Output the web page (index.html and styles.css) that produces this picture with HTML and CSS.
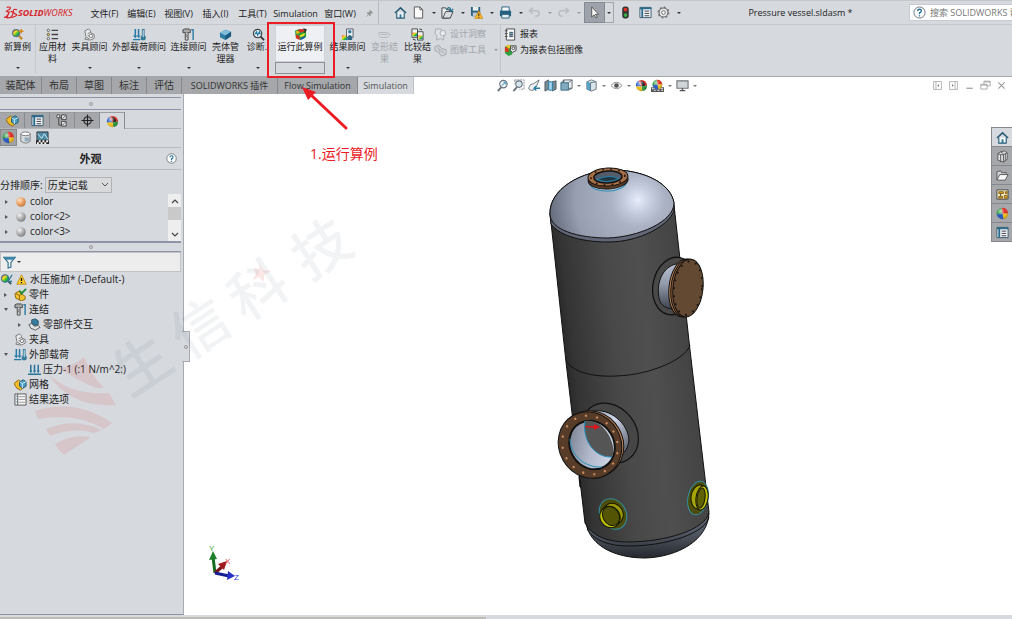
FILE: index.html
```html
<!DOCTYPE html>
<html lang="zh-CN">
<head>
<meta charset="utf-8">
<meta name="viewport" content="width=device-width, initial-scale=1">
<title>Pressure vessel.sldasm</title>
<link rel="stylesheet" href="styles.css">
</head>
<body>
<svg class="sprite" aria-hidden="true">
  <defs>
    <radialGradient id="g-copper" cx=".35" cy=".3" r=".8"><stop offset="0" stop-color="#ffe2c4"/><stop offset=".5" stop-color="#eba56b"/><stop offset="1" stop-color="#b86c30"/></radialGradient>
    <radialGradient id="g-steel" cx=".35" cy=".3" r=".8"><stop offset="0" stop-color="#f4f4f4"/><stop offset=".5" stop-color="#b0b0b0"/><stop offset="1" stop-color="#777"/></radialGradient>
    <linearGradient id="g-rain" x1="0" y1="0" x2="1" y2="1"><stop offset="0" stop-color="#e32"/><stop offset=".35" stop-color="#fd2"/><stop offset=".65" stop-color="#2b3"/><stop offset="1" stop-color="#25d"/></linearGradient>
    <radialGradient id="g-shine" cx=".35" cy=".3" r=".75"><stop offset="0" stop-color="#fff" stop-opacity=".7"/><stop offset=".5" stop-color="#fff" stop-opacity="0"/><stop offset="1" stop-color="#000" stop-opacity=".25"/></radialGradient>
  </defs>
  <symbol id="i-ball" viewBox="0 0 14 14"><path d="M7 7 1 9A6 6 0 0 1 6 1z" fill="#2b9a3e"/><path d="M7 7 6 1a6 6 0 0 1 7 6z" fill="#e02a22"/><path d="M7 7h6a6 6 0 0 1-5 6z" fill="#f3c01c"/><path d="M7 7l1 6A6 6 0 0 1 1 8z" fill="#2457c4"/><circle cx="7" cy="7" r="6" fill="url(#g-shine)"/></symbol>
  <symbol id="i-ball2" viewBox="0 0 14 14"><path d="M7 8 1 8A6 6 0 0 1 4 2z" fill="#2457c4"/><path d="M7 8 4 2a6 6 0 0 1 9 5z" fill="#e02a22"/><path d="M6 2q4 0 5 5L8 8z" fill="#222"/><path d="M7 8l6-1a6 6 0 0 1-5 6z" fill="#2b9a3e"/><path d="M7 8l1 5A6 6 0 0 1 1 8z" fill="#f3c01c"/><circle cx="7" cy="7" r="6" fill="url(#g-shine)"/></symbol>
  <symbol id="i-copper" viewBox="0 0 10 10"><circle cx="5" cy="5" r="4.8" fill="url(#g-copper)"/></symbol>
  <symbol id="i-steel" viewBox="0 0 10 10"><circle cx="5" cy="5" r="4.8" fill="url(#g-steel)"/></symbol>
  <symbol id="i-study" viewBox="0 0 14 14"><path d="M8 8l4 4" stroke="#c98a1c" stroke-width="2.4"/><circle cx="5.5" cy="5.5" r="3.8" fill="url(#g-rain)" stroke="#5c7185" stroke-width="1.2"/><path d="M11 1v5M8.500 3.500h5" stroke="#d98a10" stroke-width="1.600"/></symbol>
  <symbol id="i-studysm" viewBox="0 0 14 14"><path d="M8 8l4 4" stroke="#355" stroke-width="2"/><circle cx="5.500" cy="6" r="4" fill="url(#g-rain)" stroke="#46758f" stroke-width="1.200"/><path d="M8 4l2 3 3-5M9 9l4 0" stroke="#267898" stroke-width="1.200" fill="none"/></symbol>
  <symbol id="i-matlist" viewBox="0 0 14 14"><g fill="#fff" stroke="#555"><circle cx="2.500" cy="2.500" r="1.300"/><circle cx="2.500" cy="7" r="1.300" fill="#fc3"/><circle cx="2.500" cy="11.500" r="1.300"/></g><path d="M6 2.500h7M6 7h7M6 11.500h7" stroke="#444" stroke-width="1.400"/></symbol>
  <symbol id="i-fixture" viewBox="0 0 14 14"><path d="M2 3l4-2 2 2 0 2 4 2 0 4-4 2-5-4z" fill="#e8eaec" stroke="#777"/><path d="M5 6l3-1M5 8l5 2M3 10l-1 2 5 1" stroke="#777" fill="none"/><circle cx="8.500" cy="8.500" r="1.800" fill="#fff" stroke="#777"/></symbol>
  <symbol id="i-load" viewBox="0 0 14 14"><path d="M2.500 1v8M6 1v8" stroke="#257ba8" stroke-width="1.600"/><path d="M0 8h4.500l-2 3zM4 8h4l-2 3z" fill="#257ba8"/><path d="M0 12.500h8" stroke="#257ba8" stroke-width="1.400"/><path d="M11 1v8" stroke="#347898" stroke-width="3"/><circle cx="11" cy="10.500" r="2.800" fill="#347898"/><path d="M11 2v8" stroke="#d8edf6"/></symbol>
  <symbol id="i-bolt" viewBox="0 0 14 14"><path d="M1 2l2-1h5l1 1v3H1z" fill="#aaa" stroke="#444"/><path d="M3.500 5v8h3V5" fill="#ddd" stroke="#444"/><path d="M4 7l2 1M4 9l2 1" stroke="#555"/><path d="M10 2h2v11" fill="none" stroke="#3681a8" stroke-width="1.600"/></symbol>
  <symbol id="i-shell" viewBox="0 0 14 14"><path d="M1 5l6-3 6 2v5l-6 4-6-3z" fill="#2d7ca5"/><path d="M1 5l6-3 6 2-6 4z" fill="#80bddb"/><path d="M7 8l6-4v5l-6 4z" fill="#1c5b80"/></symbol>
  <symbol id="i-diag" viewBox="0 0 14 14"><path d="M9 9l4 4" stroke="#333" stroke-width="2"/><circle cx="6" cy="6" r="4.500" fill="#edf4f8" stroke="#444" stroke-width="1.300"/><path d="M3 7l2-3 1 4 2-4 1 3" fill="none" stroke="#267ba4" stroke-width="1.200"/></symbol>
  <symbol id="i-run" viewBox="0 0 14 14"><path d="M1 3l5-2 7 2v7l-6 3-5-3z" fill="#2a9c3c"/><path d="M2 3l5 1-4 3z" fill="#f5b716"/><path d="M4 2l5-1 3 2-5 2z" fill="#e1291f"/><path d="M2 7l4 2v4l-4-2z" fill="#d92e20"/><path d="M6 8l6-3-1 3-4 2z" fill="#f5dc27"/><path d="M7 11l5-2-1 2-4 2z" fill="#2057c9"/><path d="M10 1l3 1-2 3" stroke="#222" fill="none" stroke-width="1.300"/></symbol>
  <symbol id="i-result" viewBox="0 0 14 14"><path d="M1 8h6v5H1z" fill="url(#g-rain)"/><path d="M6 1h7v9H6z" fill="#eef1f4" stroke="#4d5964"/><circle cx="9.500" cy="4" r="1.800" fill="#307a9f"/><path d="M7 10q2.500-5 5 0v3H7z" fill="#2f6683"/></symbol>
  <symbol id="i-deform" viewBox="0 0 14 14"><path d="M1 5h9l3 2-3 3H3L1 8zM3 7h7" fill="#dcdee1" stroke="#aeb2b7"/></symbol>
  <symbol id="i-compare" viewBox="0 0 14 14"><path d="M1 1h6v9H1zM7 4h6v9H7z" fill="#f4f4f4" stroke="#444"/><path d="M1.500 5h5v4h-5z" fill="url(#g-rain)"/><path d="M8 8h4.500v4H8z" fill="url(#g-rain)"/><path d="M9 1l3 1M2 12l3 1" stroke="#333"/></symbol>
  <symbol id="i-insight" viewBox="0 0 14 14"><path d="M2 1h6v3l3 2-1 7-3-2-4 2V8l-2-2z" fill="#dfe2e5" stroke="#a6abb0"/><circle cx="9.500" cy="5.500" r="3" fill="#e9ebed" stroke="#a6abb0"/></symbol>
  <symbol id="i-plot" viewBox="0 0 14 14"><path d="M1 3l4-2 3 4 5 1v5l-5 2-3-4-4-2zM4 3l3 6M7 6l4 4" fill="#cfd3d7" stroke="#a4a9ae"/></symbol>
  <symbol id="i-report" viewBox="0 0 14 14"><path d="M2.500 1h9v12h-9z" fill="#fafafa" stroke="#444"/><path d="M1 3h3M1 6h3M1 9h3" stroke="#444"/><path d="M5.500 4h4v6h-4z" fill="#9aa4ac"/><path d="M6 5h4M6 7h4M6 9h4" stroke="#37576d"/></symbol>
  <symbol id="i-capture" viewBox="0 0 14 14"><path d="M1 3l5-2 3 2v8l-4 2-4-3z" fill="#2da23e"/><path d="M1 3l4 2v4L1 8z" fill="#e23224"/><path d="M2 2l4-1 3 2-4 2z" fill="#f4c61d"/><path d="M7 2h6v5l-4 2-2-2z" fill="#eee" stroke="#444"/><circle cx="10" cy="4.500" r="1.500" fill="#fff" stroke="#444"/></symbol>
  <symbol id="i-home" viewBox="0 0 14 14"><path d="M3 7v6h8V7" fill="#f3f5f6" stroke="#245975" stroke-width="1.200"/><path d="M1 7.500 7 2l6 5.500" fill="none" stroke="#245975" stroke-width="1.600"/><path d="M6 9h2v4H6z" fill="#2d7597"/></symbol>
  <symbol id="i-new" viewBox="0 0 14 14"><path d="M2.500 1h6l3 3v9h-9z" fill="#fafafa" stroke="#555"/><path d="M8.500 1v3h3" fill="none" stroke="#555"/></symbol>
  <symbol id="i-open" viewBox="0 0 14 14"><path d="M1 2h4l1 2h3v9H1z" fill="#e9ecee" stroke="#444"/><path d="M2 13l3-7h8l-3 7z" fill="#d9dee2" stroke="#444"/><path d="M6 4q3-5 5 1M9 4l2 2 2-3" fill="none" stroke="#226d93" stroke-width="1.200"/></symbol>
  <symbol id="i-save" viewBox="0 0 14 14"><path d="M1 1h10v10H2L1 10z" fill="#2f6280"/><path d="M3 1h6v4H3z" fill="#e9eef1"/><path d="M3 7h5v4H3z" fill="#b9c8d1"/><path d="M9.500 5 14 13.500H5z" fill="#f9b92a" stroke="#c8770c" stroke-width=".6"/><path d="M9.500 8v3M9.500 12v1" stroke="#222"/></symbol>
  <symbol id="i-print" viewBox="0 0 14 14"><path d="M3 1h8v5H3z" fill="#f5f7f8" stroke="#27617f"/><path d="M1 5h12v6H1z" fill="#24617f"/><path d="M3 9h8v4H3z" fill="#e5edf1" stroke="#27617f"/></symbol>
  <symbol id="i-undo" viewBox="0 0 14 14"><path d="M5 2 1.500 5 5 8M2 5h6q4 0 4 3t-4 3" fill="none" stroke="#b7bbc0" stroke-width="1.500"/></symbol>
  <symbol id="i-cursor" viewBox="0 0 14 14"><path d="M4 1v11l2.500-2.500L8.500 13l1.500-1-2-3h3.500z" fill="#f8f8f8" stroke="#555"/></symbol>
  <symbol id="i-light" viewBox="0 0 14 14"><rect x="3.500" y=".5" width="7" height="13" rx="3" fill="#333"/><circle cx="7" cy="3.800" r="2" fill="#e43328"/><circle cx="7" cy="9.800" r="2" fill="#37ac42"/></symbol>
  <symbol id="i-panel" viewBox="0 0 14 14"><path d="M1 1.500h12v11H1z" fill="#f4f6f7" stroke="#35586c"/><path d="M1 2.500h12M3.500 3v9.500" stroke="#286b8c" stroke-width="2"/><path d="M6 5.500h5M6 8h5M6 10.500h5" stroke="#334"/></symbol>
  <symbol id="i-gear" viewBox="0 0 14 14"><circle cx="7" cy="7" r="4.800" fill="#e6e8ea" stroke="#666" stroke-width="1.200"/><circle cx="7" cy="7" r="5.800" fill="none" stroke="#666" stroke-width="1.200" stroke-dasharray="2 2.500"/><circle cx="7" cy="7" r="2" fill="#fff" stroke="#666"/></symbol>
  <symbol id="i-pin" viewBox="0 0 14 14"><path d="M8 2l4 4-2 0-2 3 0 2-5-5h2l3-2zM5 9l-3 3" fill="#999" stroke="#888"/></symbol>
  <symbol id="i-help" viewBox="0 0 14 14"><circle cx="7" cy="7" r="6" fill="#fff" stroke="#626b73"/><path d="M5 5.500q0-2 2-2t2 1.700-2 2.300v1.500M7 10v1.300" fill="none" stroke="#1f6d96" stroke-width="1.400"/></symbol>
  <symbol id="i-zoom" viewBox="0 0 14 14"><circle cx="8" cy="5.500" r="4" fill="#eef4f7" stroke="#67737c" stroke-width="1.200"/><path d="M5.500 9 2 13" stroke="#67737c" stroke-width="2"/><path d="M6 7l4-3M8 3.500h2.500V6" fill="none" stroke="#398bb0"/></symbol>
  <symbol id="i-zoomarea" viewBox="0 0 14 14"><path d="M3 1h10v10H8M3 1v4" fill="none" stroke="#7d878e" stroke-dasharray="2 1"/><circle cx="7.500" cy="5.500" r="3.500" fill="#d8e8f0" stroke="#67737c" stroke-width="1.200"/><path d="M5.500 8.500 1.500 13" stroke="#67737c" stroke-width="2"/></symbol>
  <symbol id="i-prev" viewBox="0 0 14 14"><path d="M12 1 6 5q-4 0-5 4t5 3l3-4z" fill="#eef1f3" stroke="#69737b"/><path d="M13 10H7M9 7.500 6.500 10 9 12.500" fill="none" stroke="#287fa8" stroke-width="1.500"/></symbol>
  <symbol id="i-section" viewBox="0 0 14 14"><path d="M1 3l4-2v10l-4 2zM9 3l4-1v9l-4 2z" fill="#77888f" stroke="#59656c"/><path d="M5 3h4v9H5z" fill="#a5d6e9" stroke="#287fa8"/></symbol>
  <symbol id="i-orient" viewBox="0 0 14 14"><path d="M4 1h9v9H4zM4 1v9" fill="#eef1f3" stroke="#5b6770"/><path d="M1 4h8v8H1z" fill="#83abc0" stroke="#386b83"/><path d="M1 4l3-3M9 4l4-3M9 12l4-2" stroke="#5b6770"/></symbol>
  <symbol id="i-cube" viewBox="0 0 14 14"><path d="M2 3l5-2 5 2v8l-5 2-5-2z" fill="#d9e7ed" stroke="#68747c"/><path d="M2 3l4 1v9l-4-2z" fill="#54a3c4"/><path d="M6 4l6-1M6 4v9" stroke="#68747c"/></symbol>
  <symbol id="i-eye" viewBox="0 0 14 14"><path d="M1 7q6-7 12 0-6 7-12 0z" fill="#f5f5f5" stroke="#8a9094"/><circle cx="7" cy="7" r="2.500" fill="#555"/></symbol>
  <symbol id="i-scene" viewBox="0 0 14 14"><use href="#i-ball" width="12" height="12" x="1"/><path d="M0 9h3l1 2h6l1-2h3v5H0z" fill="#555"/><path d="M1 10h2v1H1zM11 10h2v1h-2zM3 12h2v1H3zM7 12h2v1H7zM11 12h2v1h-2z" fill="#fff"/></symbol>
  <symbol id="i-monitor" viewBox="0 0 14 14"><path d="M1 2h12v8H1z" fill="#d0d5d8" stroke="#70777d" stroke-width="1.200"/><path d="M7 10v2M4 12.500h6" stroke="#555" stroke-width="1.500"/></symbol>
  <symbol id="i-dockl" viewBox="0 0 14 14"><path d="M2 2h10v10H2zM5 2v10" fill="none" stroke="#a5a5a5"/><path d="M9 5v4L6.500 7z" fill="#888"/></symbol>
  <symbol id="i-dockr" viewBox="0 0 14 14"><path d="M2 2h10v10H2zM9 2v10" fill="none" stroke="#a5a5a5"/><path d="M5 5v4l2.500-2z" fill="#888"/></symbol>
  <symbol id="i-min" viewBox="0 0 14 14"><path d="M3 10.500h8" stroke="#999" stroke-width="1.500"/></symbol>
  <symbol id="i-restore" viewBox="0 0 14 14"><path d="M5 5V1.500h8v6H9M1 5.500h8v6H1zM1 6.500h8M5 2.500h8" fill="none" stroke="#999"/></symbol>
  <symbol id="i-close" viewBox="0 0 14 14"><path d="M3 3l8 8M11 3l-8 8" stroke="#999" stroke-width="1.300"/></symbol>
  <symbol id="i-part" viewBox="0 0 14 14"><path d="M0 6l5-4 2 2v4l4 2-4 3-4-2z" fill="#f4bd28" stroke="#8a6510"/><path d="M6 4l4-2 3 2v5l-4 2-3-2z" fill="#4a9fc4" stroke="#24576e"/><path d="M6 4l3 2 4-2M9 6v5" fill="none" stroke="#d9edf6"/></symbol>
  <symbol id="i-partok" viewBox="0 0 14 14"><path d="M1 6l5-3 3 2v2l3 2v3l-4 2-6-3z" fill="#f4c22b" stroke="#8a6510"/><path d="M2 6l4 2v5M6 8l3-2" fill="none" stroke="#8a6510"/><path d="M6 3l2 3 5-5" fill="none" stroke="#218b37" stroke-width="2"/></symbol>
  <symbol id="i-config" viewBox="0 0 14 14"><path d="M3 1v11h3M3 4h3" fill="none" stroke="#444"/><path d="M6 1h5v5H6zM6 8h5v5H6z" fill="#e7eaec" stroke="#444"/><path d="M1 1h3v3H1z" fill="#eee" stroke="#555"/><path d="M7 5l3-3M7 12l3-3" stroke="#555"/></symbol>
  <symbol id="i-target" viewBox="0 0 14 14"><circle cx="7" cy="7" r="4" fill="none" stroke="#222" stroke-width="1.200"/><path d="M7 .500v13M.500 7h13" stroke="#222" stroke-width="1.200"/></symbol>
  <symbol id="i-cyl" viewBox="0 0 14 14"><path d="M2 3v8q5 4 10 0V3" fill="#d7dadd" stroke="#777"/><ellipse cx="7" cy="3" rx="5" ry="2" fill="#fff" stroke="#777"/><path d="M6 7h5v4H6z" fill="#8eacbb"/></symbol>
  <symbol id="i-decal" viewBox="0 0 14 14"><path d="M1 1h12v9H1z" fill="#4c8aa6" stroke="#333"/><path d="M2 3l4 5 3-5 4 6" fill="none" stroke="#d8eef6"/><path d="M0 10h14v4H0z" fill="#222"/><path d="M3 10h2v2H3zM7 10h2v2H7zM11 10h2v2h-2zM1 12h2v2H1zM5 12h2v2H5zM9 12h2v2H9z" fill="#fff"/></symbol>
  <symbol id="i-funnel" viewBox="0 0 14 14"><path d="M1 1.500h12L8.500 7v5L5.500 13V7z" fill="#f5f7f8" stroke="#286a89" stroke-width="1.200"/><path d="M1 1h12l-2 3H3z" fill="#3c86a9"/></symbol>
  <symbol id="i-warn" viewBox="0 0 14 14"><path d="M7 1l6 12H1z" fill="#ffd02d" stroke="#b7830d"/><path d="M7 5v4M7 10.200v1.600" stroke="#111" stroke-width="1.700"/></symbol>
  <symbol id="i-contact" viewBox="0 0 14 14"><path d="M4 2l4-1 3 2v4l-4 1-3-2z" fill="#387c9e" stroke="#24566d"/><path d="M1 7l3-1 3 3 4-1 2 2-5 3-5-2z" fill="#e2e5e7" stroke="#555"/></symbol>
  <symbol id="i-pressure" viewBox="0 0 14 14"><path d="M0 12h14M3 2v8M7 2v8M11 2v8" stroke="#27749b" stroke-width="1.600"/><path d="M1.500 8h3L3 11zM5.500 8h3L7 11zM9.500 8h3L11 11z" fill="#27749b"/></symbol>
  <symbol id="i-options" viewBox="0 0 14 14"><path d="M1 1h12v12H1z" fill="#f4f4f4" stroke="#555"/><path d="M4 1v12" stroke="#555"/><path d="M2 3.500h1M2 6.500h1M2 9.500h1" stroke="#257ba0"/><path d="M5 4h7M5 7h7M5 10h7" stroke="#999"/></symbol>
  <symbol id="i-library" viewBox="0 0 14 14"><path d="M2 4l3-2 4-1 3 2v7l-4 3-3-1-3-1z" fill="#dfe1e3" stroke="#555"/><path d="M5 5v8M8 5v8M10 4v8M2 4l3 1 3 0 4-2M5 2l3 2" stroke="#555" fill="none"/></symbol>
  <symbol id="i-folder" viewBox="0 0 14 14"><path d="M1 12V3l4-1 1 2h5v2" fill="#d5d7d9" stroke="#555"/><path d="M1 12l3-6h9l-3 6z" fill="#f6f6f6" stroke="#555"/></symbol>
  <symbol id="i-view" viewBox="0 0 14 14"><path d="M1 2h12v10H1z" fill="#f8edc8" stroke="#444"/><path d="M3 4h5v2H3zM10 4h2v2h-2zM3 9h4v2H3zM9 8h3v3H9z" fill="#e3a719" stroke="#80601a"/><path d="M5 6v3" stroke="#444"/></symbol>
</svg>

<header class="titlebar">
  <div class="brand">
    <svg class="brand-mark" viewBox="0 0 16 14" aria-hidden="true"><path d="M4 1.500q4-1 4 .5T3 6M4 6q3 0 1.500 3T1 12.500M8 5.500q4 1 2 4.500T4 12.500L7 6M15 4q-4-1-4 1.500T14 9t-5 3.500" fill="none" stroke="#d9252a" stroke-width="1.200"/></svg>
    <span class="brand-name"><b>SOLID</b>WORKS</span>
  </div>
  <nav class="menus">
    <button>文件(F)</button><button>编辑(E)</button><button>视图(V)</button><button>插入(I)</button><button>工具(T)</button><button class="m-sim">Simulation</button><button class="m-win">窗口(W)</button>
    <button class="m-pin" aria-label="固定"><svg class="icon"><use href="#i-pin"/></svg></button>
  </nav>
  <div class="quick">
    <button class="solo" aria-label="主页"><svg class="icon"><use href="#i-home"/></svg></button>
    <button class="drop" aria-label="新建"><svg class="icon"><use href="#i-new"/></svg><i class="caret"></i></button>
    <button class="drop" aria-label="打开"><svg class="icon"><use href="#i-open"/></svg><i class="caret"></i></button>
    <button class="drop" aria-label="保存"><svg class="icon"><use href="#i-save"/></svg><i class="caret"></i></button>
    <button class="drop" aria-label="打印"><svg class="icon"><use href="#i-print"/></svg><i class="caret"></i></button>
    <button class="drop off" aria-label="撤消"><svg class="icon"><use href="#i-undo"/></svg><i class="caret"></i></button>
    <button class="drop off" aria-label="重做"><svg class="icon flip"><use href="#i-undo"/></svg><i class="caret"></i></button>
    <button class="select-tool" aria-label="选择"><svg class="icon"><use href="#i-cursor"/></svg></button>
    <button class="select-more" aria-label="选择选项"><i class="caret"></i></button>
    <button class="wide" aria-label="重建模型"><svg class="icon"><use href="#i-light"/></svg></button>
    <button class="wide" aria-label="文件属性"><svg class="icon"><use href="#i-panel"/></svg></button>
    <button class="drop" aria-label="选项"><svg class="icon"><use href="#i-gear"/></svg><i class="caret"></i></button>
  </div>
  <h1 class="doc-title">Pressure vessel.sldasm *</h1>
  <label class="search"><svg class="icon"><use href="#i-help"/></svg><input type="text" aria-label="搜索" placeholder="搜索 SOLIDWORKS 帮助"></label>
</header>

<section class="ribbon" aria-label="Simulation">
  <button class="tool t-first"><svg class="icon"><use href="#i-study"/></svg><span>新算例</span><i class="caret"></i></button>
  <button class="tool t-narrow"><svg class="icon"><use href="#i-matlist"/></svg><span>应用材料</span></button>
  <button class="tool t-mid"><svg class="icon"><use href="#i-fixture"/></svg><span>夹具顾问</span><i class="caret"></i></button>
  <button class="tool t-wide"><svg class="icon"><use href="#i-load"/></svg><span>外部载荷顾问</span><i class="caret"></i></button>
  <button class="tool t-mid"><svg class="icon"><use href="#i-bolt"/></svg><span>连接顾问</span><i class="caret"></i></button>
  <button class="tool t-narrow"><svg class="icon"><use href="#i-shell"/></svg><span>壳体管理器</span></button>
  <button class="tool t-diag"><svg class="icon"><use href="#i-diag"/></svg><span>诊断..</span><i class="caret"></i></button>
  <div class="run">
    <button class="run-main"><svg class="icon"><use href="#i-run"/></svg><span>运行此算例</span></button>
    <button class="run-more" aria-label="运行选项"><i class="caret"></i></button>
    <div class="mark-box"></div>
    <svg class="mark-arrow" viewBox="0 0 50 48" aria-hidden="true"><path d="M45 43 10 10" stroke="#ec1c24" stroke-width="3" stroke-linecap="round"/><path d="M1 2l14 5-8 8z" fill="#ec1c24"/></svg>
  </div>
  <button class="tool t-mid"><svg class="icon"><use href="#i-result"/></svg><span>结果顾问</span><i class="caret"></i></button>
  <button class="tool t-narrow off"><svg class="icon"><use href="#i-deform"/></svg><span>变形结果</span></button>
  <button class="tool t-narrow"><svg class="icon"><use href="#i-compare"/></svg><span>比较结果</span></button>
  <div class="stack">
    <button class="off"><svg class="icon"><use href="#i-insight"/></svg>设计洞察</button>
    <button class="off"><svg class="icon"><use href="#i-plot"/></svg>图解工具<i class="caret"></i></button>
  </div>
  <div class="stack reports">
    <button><svg class="icon"><use href="#i-report"/></svg>报表</button>
    <button><svg class="icon"><use href="#i-capture"/></svg>为报表包括图像</button>
  </div>
</section>

<div class="tabrow">
  <nav class="tabs">
    <button class="w-l">装配体</button><button>布局</button><button>草图</button><button>标注</button><button>评估</button><button class="w-sw">SOLIDWORKS 插件</button><button class="w-flow">Flow Simulation</button><button class="w-sim active">Simulation</button>
  </nav>
  <div class="hud">
    <button aria-label="整屏显示"><svg class="icon"><use href="#i-zoom"/></svg></button>
    <button aria-label="局部放大"><svg class="icon"><use href="#i-zoomarea"/></svg></button>
    <button aria-label="上一视图"><svg class="icon"><use href="#i-prev"/></svg></button>
    <button aria-label="剖面视图"><svg class="icon"><use href="#i-section"/></svg></button>
    <button class="more" aria-label="视图定向"><svg class="icon"><use href="#i-orient"/></svg><i class="caret"></i></button>
    <button class="more" aria-label="显示样式"><svg class="icon"><use href="#i-cube"/></svg><i class="caret"></i></button>
    <button class="more" aria-label="隐藏项目"><svg class="icon"><use href="#i-eye"/></svg><i class="caret"></i></button>
    <button aria-label="编辑外观"><svg class="icon"><use href="#i-ball2"/></svg></button>
    <button class="more" aria-label="应用布景"><svg class="icon"><use href="#i-scene"/></svg><i class="caret"></i></button>
    <button class="more" aria-label="视图设定"><svg class="icon"><use href="#i-monitor"/></svg><i class="caret"></i></button>
  </div>
  <div class="winctl">
    <button aria-label="左停靠"><svg class="icon"><use href="#i-dockl"/></svg></button>
    <button aria-label="右停靠"><svg class="icon"><use href="#i-dockr"/></svg></button>
    <button aria-label="最小化"><svg class="icon"><use href="#i-min"/></svg></button>
    <button aria-label="还原"><svg class="icon"><use href="#i-restore"/></svg></button>
    <button aria-label="关闭"><svg class="icon"><use href="#i-close"/></svg></button>
  </div>
</div>

<main class="workspace">
  <aside class="side">
    <div class="splitter top"><i></i></div>
    <nav class="side-tabs">
      <button aria-label="设计树"><svg class="icon"><use href="#i-part"/></svg></button>
      <button aria-label="属性"><svg class="icon"><use href="#i-panel"/></svg></button>
      <button aria-label="配置"><svg class="icon"><use href="#i-config"/></svg></button>
      <button aria-label="尺寸"><svg class="icon"><use href="#i-target"/></svg></button>
      <button class="active" aria-label="外观"><svg class="icon"><use href="#i-ball2"/></svg></button>
    </nav>
    <div class="side-modes">
      <button class="active" aria-label="外观"><svg class="icon"><use href="#i-ball"/></svg></button>
      <button aria-label="贴图"><svg class="icon"><use href="#i-cyl"/></svg></button>
      <button aria-label="布景"><svg class="icon"><use href="#i-decal"/></svg></button>
    </div>
    <div class="side-head"><h2>外观</h2><button aria-label="帮助"><svg class="icon"><use href="#i-help"/></svg></button></div>
    <div class="sort"><label for="sort">分排顺序:</label>
      <span class="pick"><select id="sort"><option>历史记载</option></select><svg viewBox="0 0 8 6" aria-hidden="true"><path d="M1 1l3 3 3-3" fill="none" stroke="#555"/></svg></span>
    </div>
    <div class="colors">
      <ul class="color-list">
        <li><i class="twist"></i><svg class="icon"><use href="#i-copper"/></svg>color</li>
        <li><i class="twist"></i><svg class="icon"><use href="#i-steel"/></svg>color&lt;2&gt;</li>
        <li><i class="twist"></i><svg class="icon"><use href="#i-steel"/></svg>color&lt;3&gt;</li>
      </ul>
      <div class="bar">
        <button aria-label="向上"><svg viewBox="0 0 8 6"><path d="M1 5l3-3 3 3" fill="none" stroke="#444" stroke-width="1.200"/></svg></button>
        <i></i>
        <button aria-label="向下"><svg viewBox="0 0 8 6"><path d="M1 1l3 3 3-3" fill="none" stroke="#444" stroke-width="1.200"/></svg></button>
      </div>
    </div>
    <div class="splitter mid"><i></i></div>
    <label class="filter"><svg class="icon"><use href="#i-funnel"/></svg><i class="caret"></i><input type="text" aria-label="过滤"></label>
    <ul class="tree">
      <li class="root"><svg class="icon"><use href="#i-studysm"/></svg><svg class="icon warn"><use href="#i-warn"/></svg>水压施加* (-Default-)</li>
      <li><i class="twist"></i><svg class="icon"><use href="#i-partok"/></svg>零件</li>
      <li><i class="twist open"></i><svg class="icon"><use href="#i-bolt"/></svg>连结</li>
      <li class="sub"><i class="twist"></i><svg class="icon"><use href="#i-contact"/></svg>零部件交互</li>
      <li><i class="twist none"></i><svg class="icon"><use href="#i-fixture"/></svg>夹具</li>
      <li><i class="twist open"></i><svg class="icon"><use href="#i-load"/></svg>外部载荷</li>
      <li class="sub"><i class="twist none"></i><svg class="icon"><use href="#i-pressure"/></svg>压力-1 (:1 N/m^2:)</li>
      <li><i class="twist none"></i><svg class="icon"><use href="#i-part"/></svg>网格</li>
      <li><i class="twist none"></i><svg class="icon"><use href="#i-options"/></svg>结果选项</li>
    </ul>
    <button class="collapse" aria-label="折叠面板"><i></i></button>
  </aside>

  <section class="viewport" aria-label="模型视图">
    <svg class="scene" viewBox="184 94 828 521" preserveAspectRatio="xMinYMin meet" role="img" aria-label="Pressure vessel">
      <defs>
        <linearGradient id="body" gradientUnits="userSpaceOnUse" x1="560" y1="385" x2="702" y2="368"><stop offset="0" stop-color="#202020"/><stop offset=".12" stop-color="#343434"/><stop offset=".42" stop-color="#494949"/><stop offset=".65" stop-color="#4f4f4f"/><stop offset="1" stop-color="#414141"/></linearGradient>
        <radialGradient id="dome" gradientUnits="userSpaceOnUse" cx="638" cy="200" r="90"><stop offset="0" stop-color="#e8edfb"/><stop offset=".14" stop-color="#c6cee0"/><stop offset=".3" stop-color="#aab2c4"/><stop offset=".7" stop-color="#969eb0"/><stop offset="1" stop-color="#646b7b"/></radialGradient>
        <linearGradient id="base" x1="0" y1="0" x2="0" y2="1"><stop offset=".4" stop-color="#555b67"/><stop offset="1" stop-color="#25282d"/></linearGradient>
        <linearGradient id="bore" x1="0" y1="0" x2="1" y2="1"><stop offset="0" stop-color="#6c7484"/><stop offset=".5" stop-color="#b1b9cb"/><stop offset="1" stop-color="#dfe5f3"/></linearGradient>
        <linearGradient id="neck" x1="0" y1="0" x2="1" y2="1"><stop offset="0" stop-color="#9fa7b8"/><stop offset=".4" stop-color="#cdd5e6"/><stop offset="1" stop-color="#4a505c"/></linearGradient>
        <linearGradient id="side-neck" x1="0" y1="0" x2="0" y2="1"><stop offset="0" stop-color="#b8c0d2"/><stop offset=".45" stop-color="#9199aa"/><stop offset="1" stop-color="#3e434d"/></linearGradient>
      </defs>
      <g stroke="#111" stroke-linejoin="round">
        <path d="M586 523C590 546 615 558 645 558 678 557 708 540 709 513z" fill="url(#base)"/>
        <path d="M580 472l2 16-2-1-1-10z" fill="#222"/>
        <path d="M550 213L566 362 585 523C592 537 610 542 627 542 665 542 706 530 709 512L690 350 674 205z" fill="url(#body)"/>
        <path d="M550 214C549 190 580 170 616 170 646 171 671 184 674 203L674 211C668 226 640 242 608 242 578 242 558 234 551 224z" fill="#616776"/>
        <path d="M550 214C549 190 580 170 616 170 646 171 671 184 674 203 674 222 638 237 608 238 578 238 550 230 550 214z" fill="url(#dome)"/>
        <path d="M567 362C575 374 598 377 616 376 652 375 687 358 690 345M587 529C594 541 610 546 629 546 667 546 706 533 709 517" fill="none"/>
      </g>
      <g transform="rotate(-3 608 178)">
        <ellipse cx="608" cy="183" rx="18" ry="8" fill="#b6bed0" stroke="#2b90b6"/>
        <ellipse cx="608" cy="180" rx="20" ry="9" fill="#593a24" stroke="#111"/>
        <ellipse cx="608" cy="177" rx="20" ry="9" fill="#a66f46" stroke="#111"/>
        <ellipse cx="608" cy="177" rx="17" ry="8" fill="none" stroke="#2b1c12" stroke-width="2" stroke-linecap="round" stroke-dasharray="0 8"/>
        <ellipse cx="608" cy="177" rx="14" ry="6" fill="#555c69" stroke="#111" stroke-width="1.500"/>
        <path d="M597 179q11-5 22 0-11 5-22 0z" fill="#22343d" stroke="#2382aa"/>
      </g>
      <g>
        <ellipse cx="674" cy="286" rx="21" ry="29" transform="rotate(12 674 286)" fill="#494949" stroke="#111" stroke-width="1.300"/>
        <path d="M676 264C663 267 656 282 659 298 660 304 664 308 672 309L690 268z" fill="url(#side-neck)" stroke="#111"/>
        <ellipse cx="684" cy="288" rx="15" ry="29" transform="rotate(6 684 288)" fill="#c38656" stroke="#111"/>
        <ellipse cx="686" cy="288" rx="15" ry="29" transform="rotate(6 686 288)" fill="#8a5b38" stroke="#111"/>
        <ellipse cx="688" cy="288" rx="15" ry="29" transform="rotate(6 688 288)" fill="#644932" stroke="#111"/>
        <ellipse cx="688" cy="288" rx="14" ry="27" transform="rotate(6 688 288)" fill="none" stroke="#1e1712" stroke-width="2.200" stroke-linecap="round" stroke-dasharray="0 8"/>
      </g>
      <g>
        <ellipse cx="610" cy="433" rx="26" ry="32" transform="rotate(-38 610 433)" fill="#464646" stroke="#111" stroke-width="1.200"/>
        <path d="M592 411C610 408 628 423 629 440 628 451 621 456 617 457L594 424z" fill="url(#neck)" stroke="#111"/>
        <ellipse cx="592" cy="444" rx="31" ry="34" transform="rotate(-30 592 444)" fill="#bd8153" stroke="#111"/>
        <ellipse cx="590" cy="445" rx="31" ry="34" transform="rotate(-30 590 445)" fill="#573d29" stroke="#111"/>
        <ellipse cx="590" cy="445" rx="27" ry="30" transform="rotate(-30 590 445)" fill="none" stroke="#c98a5c" stroke-width="2.400" stroke-linecap="round" stroke-dasharray="0 11.200"/>
        <ellipse cx="592" cy="445" rx="22" ry="25" transform="rotate(-30 592 445)" fill="url(#bore)" stroke="#111" stroke-width="2"/>
        <path d="M585 421C582 442 596 458 612 457 616 448 610 432 599 424 594 421 589 420 585 421z" fill="#555"/>
        <path d="M585 421C582 442 596 458 612 457M570 439C571 456 585 468 602 467" fill="none" stroke="#268fb9"/>
        <path d="M585 426h9v-2l6 3-6 3v-2l-9-1z" fill="#df151b"/>
      </g>
      <g stroke="#171700">
        <ellipse cx="613" cy="514" rx="13" ry="16" transform="rotate(-30 613 514)" fill="#4c4d0c" stroke="#318fa6"/>
        <ellipse cx="613" cy="514" rx="10" ry="11" transform="rotate(-30 613 514)" fill="#999906"/>
        <ellipse cx="610" cy="517" rx="10" ry="11" transform="rotate(-30 610 517)" fill="#bcbc09"/>
        <ellipse cx="611" cy="516" rx="8" ry="10" transform="rotate(-30 611 516)" fill="#545405"/>
        <ellipse cx="698" cy="498" rx="10" ry="17" transform="rotate(12 698 498)" fill="#4c4d0c" stroke="#318fa6"/>
        <ellipse cx="699" cy="497" rx="8" ry="12" transform="rotate(8 699 497)" fill="#a5a507"/>
        <ellipse cx="702" cy="498" rx="6" ry="12" transform="rotate(8 702 498)" fill="#c1c10a"/>
        <ellipse cx="701" cy="498" rx="4" ry="10" transform="rotate(8 701 498)" fill="#606005"/>
      </g>
      <g class="axes">
        <path d="M215 573l-2-16" stroke="#176b20" stroke-width="3"/><path d="M209 560l4-9 4 8z" fill="#1c8129"/>
        <path d="M215 573l8-7" stroke="#7c1517" stroke-width="3"/><path d="M218 564l9-3-3 9z" fill="#a31a1e"/>
        <path d="M215 573l14 3" stroke="#151c91" stroke-width="3"/><path d="M228 571l7 5-8 4z" fill="#2830c6"/>
        <text x="209" y="551" fill="#36a643">Y</text><text x="225" y="564" fill="#ee4549">X</text><text x="234" y="580" fill="#3239e0">Z</text>
      </g>
    </svg>
    <p class="note">1.运行算例</p>
    <nav class="dock">
      <button class="active" aria-label="资源"><svg class="icon"><use href="#i-home"/></svg></button>
      <button aria-label="设计库"><svg class="icon"><use href="#i-library"/></svg></button>
      <button aria-label="文件探索器"><svg class="icon"><use href="#i-folder"/></svg></button>
      <button aria-label="视图调色板"><svg class="icon"><use href="#i-view"/></svg></button>
      <button aria-label="外观布景"><svg class="icon"><use href="#i-ball"/></svg></button>
      <button aria-label="自定义属性"><svg class="icon"><use href="#i-panel"/></svg></button>
    </nav>
  </section>

  <svg class="watermark" viewBox="0 94 380 380" aria-hidden="true">
    <g fill="#e1463c" fill-opacity=".13">
      <path d="M84 357Q92 376 104 388L96 388Q72 378 60 368 74 366 84 357z"/>
      <path d="M48 374Q72 396 109 393L116 405Q70 408 48 374z"/>
      <path d="M35 411Q75 398 112 423L104 429Q76 412 38 419z"/>
      <path d="M46 429Q75 417 102 430L94 433Q74 427 50 436z"/>
      <path d="M55 444Q72 434 91 437L64 455Q58 450 55 444z"/>
      <path d="M259 263l4 7 8 1-7 4 0 7-5-5-6 3 3-7-3-5 7 1z"/>
    </g>
    <text transform="translate(148 386) rotate(-33)" x="-22 47 116 192" y="0">生信科技</text>
  </svg>
</main>
<footer class="status"><i></i></footer>
</body>
</html>
```
FILE: styles.css
```css
* { box-sizing: border-box; }
body {
  margin: 0;
  min-height: 100vh;
  display: flex;
  flex-direction: column;
  overflow: hidden;
  background: #fff;
  color: #222;
  font: 10px/15px "Open Sans", "Noto Sans CJK SC", sans-serif;
}
button {
  display: flex;
  align-items: center;
  justify-content: center;
  padding: 0;
  border: 0;
  background: none;
  color: inherit;
  font: inherit;
  white-space: nowrap;
}
input, select { font: inherit; color: inherit; border: 0; padding: 0; min-width: 0; }
ul { list-style: none; margin: 0; padding: 0; }
h1, h2, p { margin: 0; }
.sprite { position: absolute; width: 0; height: 0; }
.icon { width: 13px; height: 13px; flex: none; }
.flip { transform: scaleX(-1); }
.caret { width: 0; height: 0; flex: none; border: 2px solid transparent; border-top-color: #333; border-bottom: 0; }
.off { color: #a2a6ab; }
.off .caret { border-top-color: #999; }

.titlebar {
  display: flex;
  align-items: center;
  height: 25px;
  background: #d6d9de;
  border-top: 1px solid #c4c6c8;
  border-bottom: 1px solid #c6c8cb;
}
.brand { display: flex; align-items: center; width: 86px; padding-left: 3px; color: #d9252a; }
.brand-mark { width: 15px; height: 15px; }
.brand-name { font: italic 9px/14px "Noto Sans", sans-serif; }
.menus { display: flex; height: 23px; align-items: center; padding-top: 2px; border-right: 1px solid #b8babd; font-size: 9px; }
.menus button { width: 37px; }
.menus .m-sim { width: 49px; }
.menus .m-win { width: 40px; }
.menus .m-pin { width: 18px; }
.menus .icon { width: 9px; height: 9px; }
.quick { display: flex; align-items: center; padding-left: 11px; }
.quick .solo { width: 20px; }
.quick .drop { width: 29px; gap: 7px; justify-content: flex-start; padding-left: 2px; }
.quick .wide { width: 20px; }
.quick .select-tool { width: 21px; height: 21px; background: #9ea3ab; border: 1px solid #858b93; }
.quick .select-more { width: 9px; height: 21px; border: 1px solid #a3a6aa; border-left: 0; margin-right: 1px; }
.doc-title { flex: 1; text-align: center; font-size: 9px; font-weight: 400; padding-left: 8px; }
.search { display: flex; align-items: center; gap: 4px; width: 103px; height: 17px; padding-left: 3px; background: #fff; border: 1px solid #c8cbd0; border-right: 0; }
.search input { flex: 1; background: none; font-size: 9px; }
.search input::placeholder { color: #777; opacity: 1; }

.ribbon { display: flex; height: 51px; background: #d6d9de; font-size: 9px; line-height: 12px; }
.tool { position: relative; flex-direction: column; justify-content: flex-start; padding-top: 3px; height: 49px; }
.tool span { white-space: normal; word-break: break-all; }
.tool > .caret { position: absolute; bottom: 5px; left: 50%; margin-left: -2px; }
.t-first { width: 36px; border-right: 1px solid #c6c9cd; }
.t-narrow { width: 33px; padding-left: 3px; padding-right: 3px; }
.t-mid { width: 41px; }
.t-wide { width: 58px; }
.t-diag { width: 32px; }
.run { position: relative; width: 50px; height: 50px; margin-left: 1px; }
.run-main { width: 50px; height: 37px; flex-direction: column; justify-content: flex-start; padding-top: 2px; background: #eef0f4; border: 1px solid #d0d3d8; }
.run-more { width: 50px; height: 12px; border: 1px solid #8d9197; }
.mark-box { position: absolute; left: -8px; top: -3px; width: 68px; height: 56px; border: 2px solid #ec1c24; z-index: 4; }
.mark-arrow { position: absolute; left: 26px; top: 60px; width: 50px; height: 48px; z-index: 4; }
.run + .tool { margin-left: 2px; }
.stack { display: flex; flex-direction: column; gap: 4px; width: 67px; padding-top: 3px; border-right: 1px solid #c0c3c7; height: 48px; }
.stack button { justify-content: flex-start; height: 12px; gap: 3px; }
.stack .caret { margin-left: 5px; }
.stack.reports { width: auto; border: 0; padding-left: 3px; }

.tabrow { display: flex; height: 18px; border-top: 1px solid #a5a7aa; }
.tabs { display: flex; }
.tabs button { width: 35px; background: #a5a7aa; border-right: 1px solid #85888c; color: #333; }
.tabs .w-l { width: 42px; }
.tabs .w-sw { width: 96px; font-size: 9px; }
.tabs .w-flow { width: 80px; font-size: 9px; }
.tabs .w-sim { width: 56px; font-size: 9px; }
.tabs .active { background: #d6d9de; color: #555; border-right-color: #bfc2c6; }
.hud { display: flex; align-items: center; padding-left: 80px; }
.hud button { width: 16px; }
.hud .more { width: 25px; gap: 4px; }
.hud .caret { border-top-color: #777; }
.winctl { display: flex; align-items: center; margin-left: auto; padding-right: 3px; }
.winctl button { width: 16px; }
.winctl .icon { width: 11px; height: 11px; }

.workspace { position: relative; flex: 1; display: flex; }
.side { position: relative; width: 184px; background: #d6d9de; border-right: 1px solid #a7aab0; border-bottom: 1px solid #8f95a0; padding-right: 2px; }
.splitter { display: flex; align-items: center; justify-content: center; border: 1px solid #8f93a8; border-width: 1px 0; }
.splitter i, .collapse i { width: 4px; height: 4px; border: 1px solid #999; border-radius: 50%; }
.splitter.top { height: 13px; margin-top: 3px; }
.splitter.mid { height: 11px; border-top-width: 2px; }
.side-tabs { display: flex; height: 17px; margin-top: 2px; border-bottom: 1px solid #b3b5b8; }
.side-tabs button { width: 25px; background: #a5a7aa; border-right: 1px solid #888b8f; border-top: 1px solid #9a9da0; }
.side-tabs .active { height: 17px; background: #d6d9de; }
.side-modes { display: flex; height: 19px; border-bottom: 1px solid #b9bbbe; }
.side-modes button { width: 17px; height: 17px; }
.side-modes .active { background: #9ea1a5; border: 1px solid #888; }
.side-head { display: flex; align-items: center; height: 22px; border-bottom: 1px solid #b9bbbe; }
.side-head h2 { flex: 1; padding-left: 20px; text-align: center; font-size: 11px; }
.side-head button { width: 20px; }
.side-head .icon { width: 11px; height: 11px; }
.sort { display: flex; align-items: center; height: 24px; padding-top: 6px; gap: 2px; }
.pick { position: relative; display: flex; width: 67px; height: 16px; }
.pick select { width: 100%; appearance: none; background: #d9dadc; border: 1px solid #b1b3b6; border-radius: 0; padding-left: 2px; }
.pick svg { position: absolute; right: 3px; top: 5px; width: 8px; height: 6px; pointer-events: none; }
.colors { display: flex; height: 47px; }
.color-list { flex: 1; }
.color-list li, .tree li { display: flex; align-items: center; height: 15px; gap: 3px; white-space: nowrap; }
.color-list li { gap: 4px; padding-left: 5px; }
.color-list .twist { margin-right: 3px; }
.color-list .icon { width: 10px; height: 10px; }
.twist { width: 4px; height: 4px; flex: none; border: 2px solid transparent; border-left: 3px solid #555; border-right: 0; }
.twist.open { border: 2px solid transparent; border-top: 3px solid #555; border-bottom: 0; }
.twist.none { border-color: transparent; }
.bar { display: flex; flex-direction: column; width: 13px; background: #eee; }
.bar button { height: 13px; }
.bar svg { width: 8px; height: 6px; }
.bar i { height: 13px; background: #c9c9c9; margin-bottom: auto; }
.filter { display: flex; align-items: center; gap: 1px; height: 20px; padding-left: 2px; border: 1px solid #c3c3c5; background: #ededed; }
.filter input { flex: 1; background: none; }
.tree li { padding-left: 4px; gap: 2px; }
.tree .twist { margin-right: 4px; }
.tree .root { padding-left: 0; gap: 3px; }
.tree .root .warn { width: 11px; }
.tree .sub { padding-left: 18px; }
.collapse { position: absolute; left: 182px; top: 237px; width: 8px; height: 31px; background: #d6d9de; border: 1px solid #a7aab0; border-left: 0; }
.viewport { position: relative; flex: 1; min-width: 0; }
.scene { display: block; width: 100%; height: 100%; }
.axes text { font: 8px "Liberation Sans", sans-serif; }
.note { position: absolute; left: 126px; top: 50px; color: #ec1c24; font-size: 14px; line-height: 20px; }
.dock { position: absolute; right: 0; top: 33px; width: 21px; border: 1px solid #85888c; border-right: 0; }
.dock button { width: 100%; height: 19px; background: #a5a7aa; border-bottom: 1px solid #85888c; }
.dock button:last-child { border-bottom: 0; height: 18px; }
.dock .active { background: #d6d9de; }
.watermark { position: absolute; left: 0; top: 0; width: 380px; height: 380px; pointer-events: none; }
.watermark text { font: 500 57px "Noto Sans CJK SC", sans-serif; fill: #3c5a6e; fill-opacity: .07; }
.status { height: 4px; padding-top: 2px; background: #d6d9de; }
.status i { display: block; width: 48%; height: 2px; background: #bdbdb5; }
```
